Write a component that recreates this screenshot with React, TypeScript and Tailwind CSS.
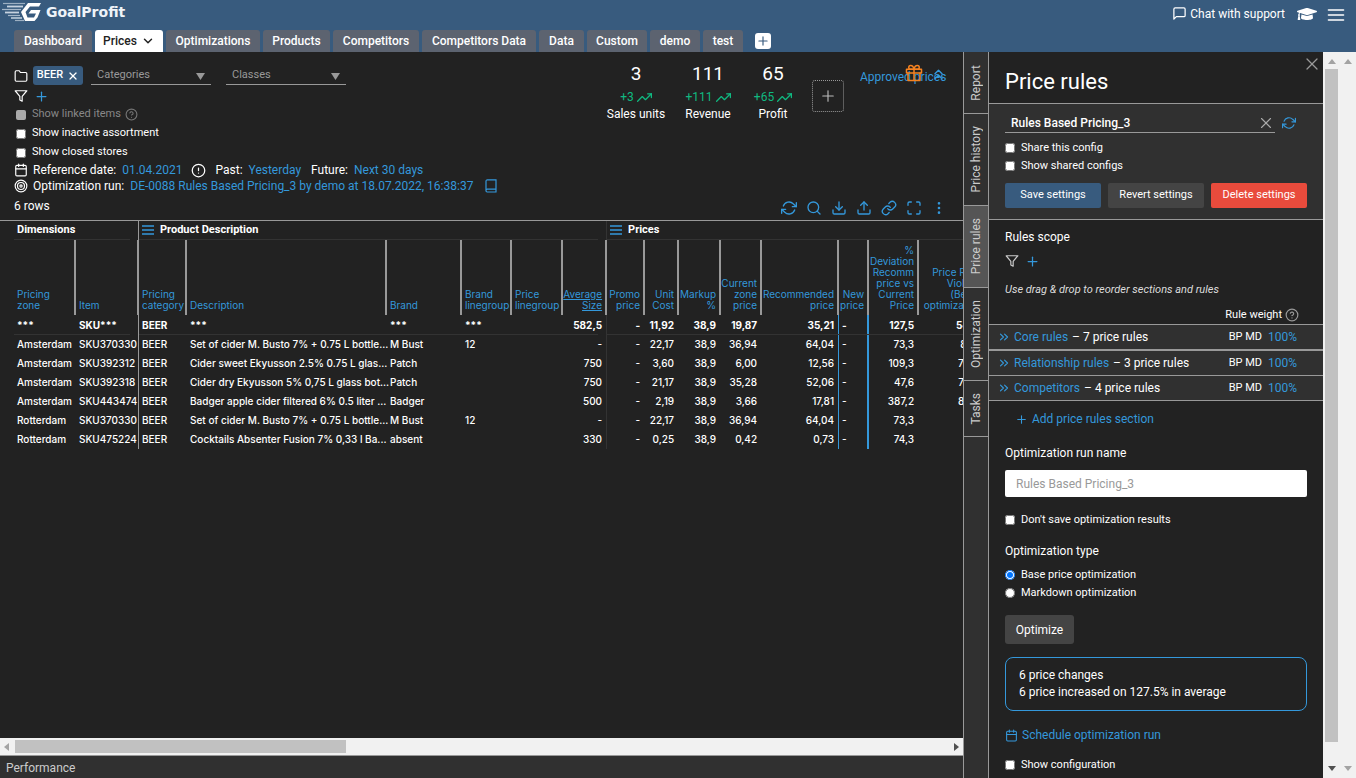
import React from "react";
import {
  FiAlertCircle,
  FiCalendar,
  FiDownload,
  FiFilter,
  FiFolder,
  FiGift,
  FiHelpCircle,
  FiLink,
  FiMaximize,
  FiMenu,
  FiMessageSquare,
  FiMoreVertical,
  FiPlus,
  FiRefreshCw,
  FiSearch,
  FiTarget,
  FiTrendingUp,
  FiUpload,
  FiX,
  FiChevronDown,
  FiChevronsRight,
  FiChevronsUp,
} from "react-icons/fi";
import { FaGraduationCap } from "react-icons/fa";

const navTabs = [
  { label: "Dashboard", width: "w-[78px]" },
  { label: "Prices", width: "w-[68px]", active: true },
  { label: "Optimizations", width: "w-[94px]" },
  { label: "Products", width: "w-[67px]" },
  { label: "Competitors", width: "w-[86px]" },
  { label: "Competitors Data", width: "w-[114px]" },
  { label: "Data", width: "w-[45px]" },
  { label: "Custom", width: "w-[60px]" },
  { label: "demo", width: "w-[50px]" },
  { label: "test", width: "w-[40px]" },
];

const kpis = [
  { value: "3", delta: "+3", label: "Sales units", width: "w-[76px]" },
  { value: "111", delta: "+111", label: "Revenue", width: "w-[68px]" },
  { value: "65", delta: "+65", label: "Profit", width: "w-[62px]" },
];

const sideTabs = [
  { label: "Report", height: "h-[62px]" },
  { label: "Price history", height: "h-[92px]" },
  { label: "Price rules", height: "h-[82px]", active: true },
  { label: "Optimization", height: "h-[93px]" },
  { label: "Tasks", height: "h-[56px]" },
];

type Column = { title: string; width: string; right?: boolean; underline?: boolean };

const columns: Column[] = [
  { title: "Pricing zone", width: "w-[62px]" },
  { title: "Item", width: "w-[63px]" },
  { title: "Pricing category", width: "w-[48px]" },
  { title: "Description", width: "w-[200px]" },
  { title: "Brand", width: "w-[75px]" },
  { title: "Brand linegroup", width: "w-[50px]" },
  { title: "Price linegroup", width: "w-[51px]" },
  { title: "Average Size", width: "w-[44px]", right: true, underline: true },
  { title: "Promo price", width: "w-[38px]", right: true },
  { title: "Unit Cost", width: "w-[34px]", right: true },
  { title: "Markup %", width: "w-[42px]", right: true },
  { title: "Current zone price", width: "w-[41px]", right: true },
  { title: "Recommended price", width: "w-[77px]", right: true },
  { title: "New price", width: "w-[30px]", right: true },
  { title: "% Deviation Recomm price vs Current Price", width: "w-[50px]", right: true },
  { title: "Price Rules Violated (Before optimization)", width: "w-[71px]", right: true },
];

const totals = ["***", "SKU***", "BEER", "***", "***", "***", "", "582,5", "-", "11,92", "38,9", "19,87", "35,21", "-", "127,5", "54,42"];

const rows = [
  ["Amsterdam", "SKU370330", "BEER", "Set of cider M. Busto 7% + 0.75 L bottle...", "M Bust", "12", "", "-", "-", "22,17", "38,9", "36,94", "64,04", "-", "73,3", "80,15"],
  ["Amsterdam", "SKU392312", "BEER", "Cider sweet Ekyusson 2.5% 0.75 L glas...", "Patch", "", "", "750", "-", "3,60", "38,9", "6,00", "12,56", "-", "109,3", "78,20"],
  ["Amsterdam", "SKU392318", "BEER", "Cider dry Ekyusson 5% 0,75 L glass bot...", "Patch", "", "", "750", "-", "21,17", "38,9", "35,28", "52,06", "-", "47,6", "76,33"],
  ["Amsterdam", "SKU443474", "BEER", "Badger apple cider filtered 6% 0.5 liter ...", "Badger", "", "", "500", "-", "2,19", "38,9", "3,66", "17,81", "-", "387,2", "80,67"],
  ["Rotterdam", "SKU370330", "BEER", "Set of cider M. Busto 7% + 0.75 L bottle...", "M Bust", "12", "", "-", "-", "22,17", "38,9", "36,94", "64,04", "-", "73,3", "7,15"],
  ["Rotterdam", "SKU475224", "BEER", "Cocktails Absenter Fusion 7% 0,33 l Ba...", "absent", "", "", "330", "-", "0,25", "38,9", "0,42", "0,73", "-", "74,3", "7,20"],
];

function edge(i: number) {
  if (i === 1) return "border-r border-[#999] pr-1";
  if (i === 7) return "border-r border-[#333] pr-1";
  if (i === 12) return "border-r border-[#3498db] pr-1";
  if (i === 13) return "border-r-2 border-[#3498db] pr-[3px]";
  return "border-r-2 border-transparent pr-[3px]";
}

function align(i: number) {
  return columns[i].right && i !== 13 ? "text-right" : "text-left";
}

function Logo() {
  return (
    <a href="#home" className="flex items-center gap-1 text-white">
      <svg width="40" height="20" viewBox="0 0 40 20" fill="none">
        <g stroke="#dfe8f0">
          <path d="M1 1.500H23" strokeWidth="1.200" opacity=".6" />
          <path d="M5 4.500H21" strokeWidth="1.800" opacity=".85" />
          <path d="M0 7.500H19" strokeWidth="1.200" opacity=".65" />
          <path d="M3 10.500H17" strokeWidth="1.800" opacity=".85" />
          <path d="M6 13.500H18" strokeWidth="1.200" opacity=".65" />
          <path d="M9 16H20" strokeWidth="1.600" opacity=".8" />
          <path d="M13 18.500H22" strokeWidth="1.200" opacity=".6" />
        </g>
        <path d="M26 1H39L37 4.500H28L23.500 10L25.500 15.500H32L34 11.500H26.500L29 8H38.500L35.500 15.500L32.500 19H23L19 10Z" fill="#fff" />
      </svg>
      <span className="font-['DejaVu_Sans',sans-serif] text-[14px] leading-5 font-bold text-[#eef3f8]">GoalProfit</span>
    </a>
  );
}

function NotebookIcon() {
  return (
    <svg width="12" height="14" viewBox="0 0 12 14" fill="none" stroke="currentColor" strokeWidth="1.200">
      <path d="M2.500 .8H11V13H2.200A1.300 1.300 0 0 1 1 11.700V2.200A1.400 1.400 0 0 1 2.500 .8ZM1 11.400A1.300 1.300 0 0 1 2.200 10.200H11" />
    </svg>
  );
}

function Check({ label, muted, children }: { label: string; muted?: boolean; children?: React.ReactNode }) {
  return (
    <label className={"flex items-center text-[11px] " + (muted ? "text-[#888]" : "text-white")}>
      <input type="checkbox" disabled={muted} className={"size-[10px] shrink-0 " + (muted ? "appearance-none rounded-[2px] bg-[#aaa]" : "")} />
      <span className="ml-[6px]">{label}</span>
      {children}
    </label>
  );
}

function Header() {
  return (
    <header className="flex h-[52px] shrink-0 flex-col justify-between bg-[#385b7e]">
      <div className="flex items-start justify-between pr-[10px] pl-[2px] pt-[2px]">
        <Logo />
        <div className="flex items-center text-xs text-white">
          <button className="flex items-center gap-[3px]">
            <FiMessageSquare size={15} />
            Chat with support
          </button>
          <button aria-label="Academy" className="ml-3">
            <FaGraduationCap size={20} />
          </button>
          <button aria-label="Menu" className="mt-[3px] ml-[9px]">
            <FiMenu size={20} />
          </button>
        </div>
      </div>
      <nav className="flex items-end gap-[3px] pl-[14px] text-xs font-medium">
        {navTabs.map((t) => (
          <a
            key={t.label}
            href={"#" + t.label}
            className={
              "flex h-[22px] shrink-0 items-center justify-center gap-1 rounded-t-[3px] whitespace-nowrap " +
              t.width +
              (t.active ? " bg-white text-[#222]" : " bg-[#5c6370] text-white")
            }
          >
            {t.label}
            {t.active && <FiChevronDown size={14} strokeWidth={2.500} />}
          </a>
        ))}
        <button aria-label="Add tab" className="mb-[3px] ml-[9px] flex size-4 items-center justify-center rounded-[3px] bg-white text-[#385b7e]">
          <FiPlus size={14} />
        </button>
      </nav>
    </header>
  );
}

function Dropdown({ label }: { label: string }) {
  return (
    <div className="relative w-[120px]">
      <select aria-label={label} className="h-[19px] w-full appearance-none border-b border-[#999] pl-[6px] text-[11px] text-[#999] outline-none">
        <option>{label}</option>
      </select>
      <svg width="9" height="7" viewBox="0 0 9 7" className="pointer-events-none absolute top-[7px] right-[6px]">
        <path d="M0 0H9L4.500 7Z" fill="#999" />
      </svg>
    </div>
  );
}

function Filters() {
  return (
    <div className="min-w-0 flex-1 text-xs text-white">
      <div className="flex h-[23px] items-center">
        <FiFolder size={14} />
        <button className="ml-[5px] flex h-[19px] w-[50px] items-center justify-center gap-1 rounded-[3px] bg-[#385b7e] text-[11px] font-medium">
          BEER
          <FiX size={12} strokeWidth={2.500} />
        </button>
        <div className="ml-2 flex gap-[15px]">
          <Dropdown label="Categories" />
          <Dropdown label="Classes" />
        </div>
      </div>
      <div className="flex h-[18px] items-center gap-[6px]">
        <FiFilter size={14} />
        <button aria-label="Add filter" className="text-[#3498db]">
          <FiPlus size={15} />
        </button>
      </div>
      <div className="pl-[2px]">
        <div className="flex h-[19px] items-center">
          <Check label="Show linked items" muted>
            <FiHelpCircle size={13} className="ml-1 text-[#777]" />
          </Check>
        </div>
        <div className="flex h-[19px] items-center">
          <Check label="Show inactive assortment" />
        </div>
        <div className="flex h-[19px] items-center">
          <Check label="Show closed stores" />
        </div>
      </div>
      <div className="flex h-4 items-center whitespace-nowrap">
        <FiCalendar size={14} />
        <span className="ml-[5px]">Reference date:</span>
        <a href="#date" className="ml-[6px] text-[#3498db]">01.04.2021</a>
        <FiAlertCircle size={15} className="ml-2" />
        <span className="ml-[10px]">Past:</span>
        <a href="#past" className="ml-[6px] text-[#3498db]">Yesterday</a>
        <span className="ml-[10px]">Future:</span>
        <a href="#future" className="ml-[6px] text-[#3498db]">Next 30 days</a>
      </div>
      <div className="flex h-4 items-center whitespace-nowrap">
        <FiTarget size={14} />
        <span className="ml-[5px]">Optimization run:</span>
        <a href="#run" className="ml-[6px] text-[#3498db]">DE-0088 Rules Based Pricing_3 by demo at 18.07.2022, 16:38:37</a>
        <button aria-label="Run notes" className="ml-3 text-[#3498db]">
          <NotebookIcon />
        </button>
      </div>
    </div>
  );
}

function Kpis() {
  return (
    <div className="flex shrink-0 items-start text-white">
      {kpis.map((k) => (
        <div key={k.label} className={"flex flex-col items-center " + k.width}>
          <span className="text-[19px] leading-5">{k.value}</span>
          <span className="mt-1 flex h-[18px] items-center gap-[3px] text-xs text-[#10b981]">
            {k.delta}
            <FiTrendingUp size={15} />
          </span>
          <span className="text-xs leading-4">{k.label}</span>
        </div>
      ))}
      <button aria-label="Add indicator" className="mt-4 ml-2 flex size-8 items-center justify-center rounded-[3px] border border-dotted border-[#999] text-[#bbb]">
        <FiPlus size={18} strokeWidth={1.500} />
      </button>
      <div className="relative ml-4 w-[89px]">
        <a href="#approved" className="text-xs leading-[18px] whitespace-nowrap text-[#3498db]">Approved prices</a>
        <FiGift size={18} className="absolute top-0 left-[45px] text-[#f58220]" />
        <FiChevronsUp size={17} className="absolute top-[2px] left-[70px] text-[#3498db]" />
      </div>
    </div>
  );
}

const tools = [
  { label: "Refresh", Icon: FiRefreshCw },
  { label: "Search", Icon: FiSearch },
  { label: "Download", Icon: FiDownload },
  { label: "Upload", Icon: FiUpload },
  { label: "Copy link", Icon: FiLink },
  { label: "Full screen", Icon: FiMaximize },
  { label: "More", Icon: FiMoreVertical },
];

function GroupTitle({ children, menu, last }: { children: React.ReactNode; menu?: boolean; last?: boolean }) {
  return (
    <div className={"flex h-[19px] items-center gap-[6px] border-b border-[#333] pl-[3px] text-[11px] font-bold " + (last ? "" : "mr-2")}>
      {menu && (
        <svg width="12" height="10" viewBox="0 0 12 10" fill="none" stroke="#3498db" strokeWidth="1.300">
          <path d="M0 1H12M0 5H12M0 9H12" />
        </svg>
      )}
      {children}
    </div>
  );
}

function PriceTable() {
  return (
    <table className="w-[976px] table-fixed border-separate border-spacing-0 font-['Inter',sans-serif] text-[10px] text-white">
      <colgroup>
        {columns.map((c) => (
          <col key={c.title} className={c.width} />
        ))}
      </colgroup>
      <thead>
        <tr className="text-left font-['Roboto',sans-serif]">
          <th colSpan={2} className="border-r border-[#999] p-0"><GroupTitle>Dimensions</GroupTitle></th>
          <th colSpan={6} className="border-r border-[#333] p-0"><GroupTitle menu>Product Description</GroupTitle></th>
          <th colSpan={8} className="p-0"><GroupTitle menu last>Prices</GroupTitle></th>
        </tr>
        <tr>
          {columns.map((c) => (
            <th
              key={c.title}
              className={
                "h-[75px] border-r-2 border-[#999] pr-[3px] pb-1 pl-[2px] align-bottom leading-[11px] font-normal text-[#3498db] " +
                (c.right ? "text-right " : "text-left ") +
                (c.underline ? "underline" : "")
              }
            >
              <div className={c.right ? "flex flex-col items-end" : "pl-px"}>
                <span>{c.title}</span>
              </div>
            </th>
          ))}
        </tr>
      </thead>
      <tbody className="font-medium whitespace-nowrap">
        <tr className="font-bold">
          {totals.map((v, i) => (
            <td
              key={i}
              className={
                "relative h-5 py-0 pl-[2px] after:absolute after:bottom-0 after:left-0 after:h-px after:bg-[#333] " +
                (i === 1 || i === 7 ? "after:right-2 " : "after:-right-[2px] ") +
                edge(i) + " " + align(i)
              }
            >
              <div className="pl-px">{v}</div>
            </td>
          ))}
        </tr>
        {rows.map((r, ri) => (
          <tr key={ri}>
            {r.map((v, i) => (
              <td key={i} className={"h-[19px] py-0 pl-[3px] " + edge(i) + " " + align(i)}>
                {v}
              </td>
            ))}
          </tr>
        ))}
      </tbody>
    </table>
  );
}

function Workspace() {
  return (
    <main className="flex min-w-0 flex-1 flex-col overflow-hidden">
      <div className="px-[14px] pt-3">
        <div className="flex">
          <Filters />
          <Kpis />
        </div>
        <div className="flex h-[26px] items-center justify-between">
          <span className="pb-[2px] text-xs text-white">6 rows</span>
          <div className="flex gap-[9px] pr-[2px] pt-[2px] text-[#3498db]">
            {tools.map(({ label, Icon }) => (
              <button key={label} aria-label={label}>
                <Icon size={16} />
              </button>
            ))}
          </div>
        </div>
      </div>
      <div className="min-h-0 flex-1 overflow-hidden border-t border-[#999] pl-[14px]">
        <PriceTable />
      </div>
      <div className="flex h-[17px] shrink-0 items-center justify-between bg-[#f1f1f1] px-1">
        <svg width="5" height="8" viewBox="0 0 5 8"><path d="M5 0V8L0 4Z" fill="#a3a3a3" /></svg>
        <div className="mx-[6px] h-full flex-1 py-[2px]">
          <div className="h-full w-[35.5%] bg-[#c1c1c1]" />
        </div>
        <svg width="5" height="8" viewBox="0 0 5 8"><path d="M0 0V8L5 4Z" fill="#505050" /></svg>
      </div>
      <footer className="h-[23px] shrink-0 border-t border-[#999] bg-[#303030] pl-[6px] text-xs leading-[25px] text-[#ccc]">Performance</footer>
    </main>
  );
}

const sections = [
  { name: "Core rules", count: 7, border: "border-b-2" },
  { name: "Relationship rules", count: 3, border: "border-b" },
  { name: "Competitors", count: 4, border: "border-b" },
];

function RulesPanel() {
  return (
    <aside className="w-[334px] shrink-0 overflow-hidden text-[11px] text-white">
      <div className="flex h-[52px] justify-between border-b border-[#999] pr-px pl-4">
        <h1 className="pt-[14px] text-[22px] leading-8 font-normal">Price rules</h1>
        <button aria-label="Close panel" className="mt-[2px] size-5 text-[#999]">
          <FiX size={20} strokeWidth={1.500} />
        </button>
      </div>
      <div className="h-[116px] border-b border-[#999] bg-[#303030] pr-4 pl-4 pt-[9px]">
        <div className="flex items-center">
          <div className="flex w-[270px] items-center border-b border-[#999]">
            <input aria-label="Configuration" defaultValue="Rules Based Pricing_3" className="h-[19px] min-w-0 flex-1 pl-[6px] text-xs font-medium outline-none" />
            <button aria-label="Clear" className="text-[#aaa]"><FiX size={18} strokeWidth={1.500} /></button>
          </div>
          <button aria-label="Reload configuration" className="ml-[7px] text-[#3498db]"><FiRefreshCw size={14} /></button>
        </div>
        <div className="mt-[6px] flex flex-col">
          <div className="flex h-[18px] items-center"><Check label="Share this config" /></div>
          <div className="flex h-[18px] items-center"><Check label="Show shared configs" /></div>
        </div>
        <div className="mt-2 flex gap-[7px]">
          <button className="h-[25px] flex-1 rounded-[2px] bg-[#385b7e]">Save settings</button>
          <button className="h-[25px] flex-1 rounded-[2px] bg-[#444]">Revert settings</button>
          <button className="h-[25px] flex-1 rounded-[2px] bg-[#e94b3c]">Delete settings</button>
        </div>
      </div>
      <div className="px-4 pt-[7px]">
        <h2 className="text-xs leading-5">Rules scope</h2>
        <div className="mt-[5px] flex h-[18px] items-center gap-[6px]">
          <FiFilter size={14} className="text-[#ccc]" />
          <button aria-label="Add scope filter" className="text-[#3498db]"><FiPlus size={15} /></button>
        </div>
        <p className="mt-3 leading-4 text-[#ddd] italic">Use drag &amp; drop to reorder sections and rules</p>
        <div className="flex h-[26px] items-end justify-end gap-[3px] pr-2 pb-[2px] leading-[15px]">
          Rule weight
          <FiHelpCircle size={14} className="text-[#999]" />
        </div>
      </div>
      <ul className="border-t border-[#999] bg-[#303030]">
        {sections.map((s) => (
          <li key={s.name} className={"flex items-center justify-between border-[#999] pr-[26px] pl-2 leading-6 " + s.border}>
            <div className="flex items-center">
              <FiChevronsRight size={14} className="text-[#3498db]" />
              <a href={"#" + s.name} className="ml-[3px] text-xs leading-6 text-[#3498db]">{s.name}</a>
              <span className="ml-1 text-xs leading-6">– {s.count} price rules</span>
            </div>
            <div className="flex gap-[6px]">
              <span>BP MD</span>
              <a href="#weight" className="text-xs leading-6 text-[#3498db]">100%</a>
            </div>
          </li>
        ))}
      </ul>
      <div className="px-4">
        <button className="mt-2 ml-[10px] flex h-5 items-center gap-1 text-xs text-[#3498db]">
          <FiPlus size={13} />
          Add price rules section
        </button>
        <label htmlFor="run-name" className="mt-[14px] block text-xs leading-5">Optimization run name</label>
        <input id="run-name" placeholder="Rules Based Pricing_3" className="mt-[7px] block h-[27px] w-full rounded-[2px] bg-white pl-[11px] text-xs text-[#222] placeholder:text-[#999]" />
        <div className="mt-[14px] flex h-[18px] items-center"><Check label="Don't save optimization results" /></div>
        <fieldset>
          <legend className="pt-3 text-xs leading-5">Optimization type</legend>
          <label className="mt-[5px] flex h-[18px] items-center gap-[6px]">
            <input type="radio" name="type" defaultChecked className="size-[10px]" />
            Base price optimization
          </label>
          <label className="flex h-[18px] items-center gap-[6px]">
            <input type="radio" name="type" className="size-[10px]" />
            Markdown optimization
          </label>
        </fieldset>
        <button className="mt-[13px] h-[29px] w-[69px] rounded-[3px] bg-[#444] text-xs">Optimize</button>
        <div className="mt-[13px] rounded-lg border border-[#3498db] px-[13px] py-[9px] text-xs leading-[17px]">
          <p>6 price changes</p>
          <p>6 price increased on 127.5% in average</p>
        </div>
        <button className="mt-[14px] flex h-5 items-center gap-1 text-xs text-[#3498db]">
          <FiCalendar size={13} />
          Schedule optimization run
        </button>
        <div className="mt-[11px] flex h-[18px] items-center"><Check label="Show configuration" /></div>
      </div>
    </aside>
  );
}

export default function App() {
  return (
    <div className="flex h-screen flex-col overflow-hidden bg-[#222] font-['Roboto',sans-serif]">
      <Header />
      <div className="flex min-h-0 flex-1">
        <Workspace />
        <nav className="w-[26px] shrink-0 border-x border-[#999] bg-[#303030]">
          {sideTabs.map((t) => (
            <button
              key={t.label}
              className={"flex w-full items-center justify-center border-b border-[#999] text-xs text-[#ccc] " + t.height + (t.active ? " bg-[#555]" : "")}
            >
              <span className="rotate-180 whitespace-nowrap [writing-mode:vertical-rl]">{t.label}</span>
            </button>
          ))}
        </nav>
        <RulesPanel />
        <div className="flex w-[33px] shrink-0 justify-between bg-[#f1f1f1] py-[7px] pr-1 pl-[2px]">
          <div className="flex w-[13px] flex-col items-center">
            <svg width="8" height="5" viewBox="0 0 8 5"><path d="M0 5H8L4 0Z" fill="#a3a3a3" /></svg>
            <div className="mt-[5px] h-[673px] w-full bg-[#c1c1c1]" />
            <svg width="8" height="5" viewBox="0 0 8 5" className="mt-auto"><path d="M0 0H8L4 5Z" fill="#505050" /></svg>
          </div>
          <div className="flex flex-col justify-between">
            <svg width="8" height="5" viewBox="0 0 8 5"><path d="M0 5H8L4 0Z" fill="#a3a3a3" /></svg>
            <svg width="8" height="5" viewBox="0 0 8 5"><path d="M0 0H8L4 5Z" fill="#a3a3a3" /></svg>
          </div>
        </div>
      </div>
    </div>
  );
}
